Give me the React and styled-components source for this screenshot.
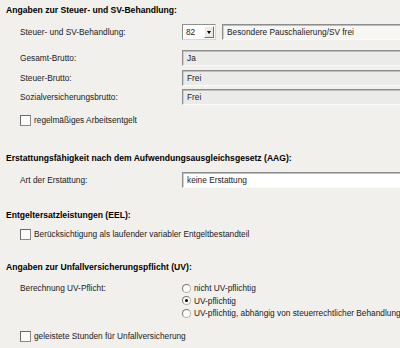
import React from "react";
import styled, { createGlobalStyle } from "styled-components";

const GlobalStyle = createGlobalStyle`
  html, body {
    margin: 0;
    padding: 0;
    background: #f1f0ec;
    overflow: hidden;
  }
  body {
    font-family: "Liberation Sans", Arial, sans-serif;
    font-size: 8.3px;
    color: #1a1a1a;
  }
`;

const Page = styled.div`
  width: 404px;
  height: 348px;
  padding: 4px 0 0 6px;
  box-sizing: border-box;
`;

const Section = styled.section`
  margin-top: ${(p) => p.$gap || 0}px;
  display: flex;
  flex-direction: column;
`;

const Heading = styled.h2`
  margin: 0;
  height: 12px;
  line-height: 12px;
  font-size: 8.6px;
  font-weight: bold;
  color: #000;
  white-space: nowrap;
`;

const Body = styled.div`
  margin-top: 8px;
  padding-left: 14px;
  display: flex;
  flex-direction: column;
`;

const Row = styled.div`
  display: grid;
  grid-template-columns: 162px 1fr;
  align-items: ${(p) => (p.$top ? "start" : "center")};
  height: ${(p) => p.$h || 16}px;
  margin-top: ${(p) => p.$mt || 0}px;
`;

const Label = styled.span`
  line-height: ${(p) => p.$lh || 16}px;
  white-space: nowrap;
`;

const Controls = styled.div`
  display: flex;
  align-items: center;
  gap: 6px;
  height: 16px;
`;

const Combo = styled.div`
  width: 34px;
  height: 16px;
  box-sizing: border-box;
  background: #fff;
  border: 1px solid #8f8f8f;
  border-right-color: #d8d8d8;
  border-bottom-color: #d8d8d8;
  display: flex;
  align-items: center;
  justify-content: space-between;
  padding: 0 1px 0 3px;
`;

const ArrowButton = styled.span`
  width: 10px;
  height: 12px;
  box-sizing: border-box;
  background: #ecebe7;
  border: 1px solid #fff;
  border-right-color: #6e6e6e;
  border-bottom-color: #6e6e6e;
  display: flex;
  align-items: center;
  justify-content: center;

  &::after {
    content: "";
    border-left: 2.5px solid transparent;
    border-right: 2.5px solid transparent;
    border-top: 3px solid #000;
  }
`;

const Field = styled.div`
  flex: 1;
  height: 16px;
  box-sizing: border-box;
  background: ${(p) => (p.$readOnly ? "#ebebea" : p.$plain ? "#f6f6f4" : "#fff")};
  border-top: 1px solid #8c8c8c;
  border-left: 1px solid #8c8c8c;
  border-bottom: 1px solid #fbfbfa;
  box-shadow: inset 0 1px 0 #bdbdbb, inset 1px 0 0 #d0d0ce;
  padding: 0 4px;
  line-height: 14px;
  white-space: nowrap;
  overflow: hidden;
`;

const CheckRow = styled.label`
  display: flex;
  align-items: center;
  gap: 3px;
  height: 12px;
  margin-top: ${(p) => p.$mt || 0}px;
  white-space: nowrap;
`;

const Box = styled.span`
  width: 11px;
  height: 11px;
  box-sizing: border-box;
  background: #fbfbfa;
  border: 1px solid #6a6a6a;
  border-right-color: #8a8a8a;
  border-bottom-color: #8a8a8a;
  flex: none;
`;

const RadioList = styled.div`
  display: flex;
  flex-direction: column;
`;

const RadioRow = styled.div`
  display: flex;
  align-items: center;
  gap: 3px;
  height: 12.5px;
  white-space: nowrap;
`;

const Dot = styled.span`
  width: 9px;
  height: 9px;
  box-sizing: border-box;
  border-radius: 50%;
  background: #fbfbfa;
  border: 1px solid #b4b4b2;
  border-top-color: #7a7a7a;
  border-left-color: #7a7a7a;
  flex: none;
  display: flex;
  align-items: center;
  justify-content: center;

  &::after {
    content: "";
    width: 3px;
    height: 3px;
    border-radius: 50%;
    background: ${(p) => (p.$on ? "#000" : "transparent")};
  }
`;

const Radio = ({ on, children }) => (
  <RadioRow>
    <Dot $on={on} />
    <span>{children}</span>
  </RadioRow>
);

const Check = ({ mt, children }) => (
  <CheckRow $mt={mt}>
    <Box />
    <span>{children}</span>
  </CheckRow>
);

export default function App() {
  return (
    <Page>
      <GlobalStyle />

      <Section>
        <Heading>Angaben zur Steuer- und SV-Behandlung:</Heading>
        <Body>
          <Row>
            <Label>Steuer- und SV-Behandlung:</Label>
            <Controls>
              <Combo>
                <span>82</span>
                <ArrowButton />
              </Combo>
              <Field $plain>Besondere Pauschalierung/SV frei</Field>
            </Controls>
          </Row>
          <Row $mt={10}>
            <Label>Gesamt-Brutto:</Label>
            <Controls>
              <Field $readOnly>Ja</Field>
            </Controls>
          </Row>
          <Row $mt={4}>
            <Label>Steuer-Brutto:</Label>
            <Controls>
              <Field $readOnly>Frei</Field>
            </Controls>
          </Row>
          <Row $mt={3}>
            <Label>Sozialversicherungsbrutto:</Label>
            <Controls>
              <Field $readOnly>Frei</Field>
            </Controls>
          </Row>
          <Check mt={9}>regelmäßiges Arbeitsentgelt</Check>
        </Body>
      </Section>

      <Section $gap={26}>
        <Heading>Erstattungsfähigkeit nach dem Aufwendungsausgleichsgesetz (AAG):</Heading>
        <Body>
          <Row>
            <Label>Art der Erstattung:</Label>
            <Controls>
              <Field>keine Erstattung</Field>
            </Controls>
          </Row>
        </Body>
      </Section>

      <Section $gap={21}>
        <Heading>Entgeltersatzleistungen (EEL):</Heading>
        <Body>
          <Check mt={-1}>Berücksichtigung als laufender variabler Entgeltbestandteil</Check>
        </Body>
      </Section>

      <Section $gap={21}>
        <Heading>Angaben zur Unfallversicherungspflicht (UV):</Heading>
        <Body>
          <Row $h={37.5} $top $mt={1}>
            <Label $lh={12.5}>Berechnung UV-Pflicht:</Label>
            <RadioList>
              <Radio>nicht UV-pflichtig</Radio>
              <Radio on>UV-pflichtig</Radio>
              <Radio>UV-pflichtig, abhängig von steuerrechtlicher Behandlung</Radio>
            </RadioList>
          </Row>
          <Check mt={10.5}>geleistete Stunden für Unfallversicherung</Check>
        </Body>
      </Section>
    </Page>
  );
}
